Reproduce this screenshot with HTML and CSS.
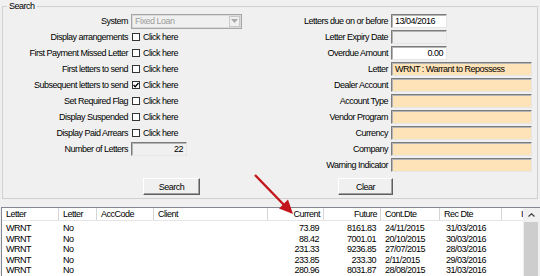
FILE: index.html
```html
<!DOCTYPE html>
<html>
<head>
<meta charset="utf-8">
<link rel="stylesheet" href="styles.css">
</head>
<body>
<div class="app">
  <fieldset class="search">
    <legend>Search</legend>
    <div class="form">
      <div class="lbl">System</div>
      <div class="ctl">
        <div class="combo"><span class="combo-text">Fixed Loan</span><span class="drop"><svg width="7" height="4" viewBox="0 0 7 4"><path d="M0 0h7L3.5 4z" fill="#a8a8a8"/></svg></span></div>
      </div>
      <div class="lbl">Letters due on or before</div>
      <div class="ctl"><div class="tb tb-white w56">13/04/2016</div></div>

      <div class="lbl">Display arrangements</div>
      <div class="ctl check"><span class="cb"></span><span>Click here</span></div>
      <div class="lbl">Letter Expiry Date</div>
      <div class="ctl"><div class="tb tb-grey w56"></div></div>

      <div class="lbl">First Payment Missed Letter</div>
      <div class="ctl check"><span class="cb"></span><span>Click here</span></div>
      <div class="lbl">Overdue Amount</div>
      <div class="ctl"><div class="tb tb-white w56 num">0.00</div></div>

      <div class="lbl">First letters to send</div>
      <div class="ctl check"><span class="cb"></span><span>Click here</span></div>
      <div class="lbl">Letter</div>
      <div class="ctl"><div class="tb tb-peach w141">WRNT : Warrant to Repossess</div></div>

      <div class="lbl">Subsequent letters to send</div>
      <div class="ctl check"><span class="cb"><svg width="6" height="6" viewBox="0 0 6 6"><path d="M0.5 3l1.7 1.8L5.5 1" fill="none" stroke="#000" stroke-width="1.3"/></svg></span><span>Click here</span></div>
      <div class="lbl">Dealer Account</div>
      <div class="ctl"><div class="tb tb-peach w141"></div></div>

      <div class="lbl">Set Required Flag</div>
      <div class="ctl check"><span class="cb"></span><span>Click here</span></div>
      <div class="lbl">Account Type</div>
      <div class="ctl"><div class="tb tb-peach w141"></div></div>

      <div class="lbl">Display Suspended</div>
      <div class="ctl check"><span class="cb"></span><span>Click here</span></div>
      <div class="lbl">Vendor Program</div>
      <div class="ctl"><div class="tb tb-peach w141"></div></div>

      <div class="lbl">Display Paid Arrears</div>
      <div class="ctl check"><span class="cb"></span><span>Click here</span></div>
      <div class="lbl">Currency</div>
      <div class="ctl"><div class="tb tb-peach w141"></div></div>

      <div class="lbl">Number of Letters</div>
      <div class="ctl"><div class="tb tb-grey w56 num">22</div></div>
      <div class="lbl">Company</div>
      <div class="ctl"><div class="tb tb-peach w141"></div></div>

      <div class="lbl"></div>
      <div class="ctl"></div>
      <div class="lbl">Warning Indicator</div>
      <div class="ctl"><div class="tb tb-peach w141"></div></div>
    </div>
    <div class="buttons">
      <button class="btn btn-search">Search</button>
      <button class="btn btn-clear">Clear</button>
    </div>
  </fieldset>

  <div class="lv">
    <div class="lv-main">
      <div class="lv-head">
        <div>Letter</div>
        <div>Letter</div>
        <div>AccCode</div>
        <div>Client</div>
        <div class="r">Current</div>
        <div class="r">Future</div>
        <div>Cont.Dte</div>
        <div>Rec Dte</div>
        <div class="r last">I</div>
      </div>
      <div class="lv-rows">
        <div class="lv-row"><div>WRNT</div><div>No</div><div></div><div></div><div class="r">73.89</div><div class="r">8161.83</div><div>24/11/2015</div><div class="rec">31/03/2016</div><div></div></div>
        <div class="lv-row"><div>WRNT</div><div>No</div><div></div><div></div><div class="r">88.42</div><div class="r">7001.01</div><div>20/10/2015</div><div class="rec">30/03/2016</div><div></div></div>
        <div class="lv-row"><div>WRNT</div><div>No</div><div></div><div></div><div class="r">231.33</div><div class="r">9236.85</div><div>27/07/2015</div><div class="rec">28/03/2016</div><div></div></div>
        <div class="lv-row"><div>WRNT</div><div>No</div><div></div><div></div><div class="r">233.85</div><div class="r">233.30</div><div>2/11/2015</div><div class="rec">29/03/2016</div><div></div></div>
        <div class="lv-row"><div>WRNT</div><div>No</div><div></div><div></div><div class="r">280.96</div><div class="r">8031.87</div><div>28/08/2015</div><div class="rec">31/03/2016</div><div></div></div>
      </div>
    </div>
    <div class="scroll">
      <div class="sb-up"><svg width="7" height="4" viewBox="0 0 7 4"><path d="M0.5 3.5L3.5 0.8 6.5 3.5" fill="none" stroke="#404040" stroke-width="1.2"/></svg></div>
      <div class="sb-thumb"></div>
    </div>
  </div>

  <svg class="arrow" width="540" height="276" viewBox="0 0 540 276">
    <line x1="255" y1="175" x2="285" y2="206" stroke="#c3161c" stroke-width="2.4"/>
    <polygon points="293,214 279,208.5 288,199.5" fill="#c3161c"/>
  </svg>
</div>
</body>
</html>
```

FILE: styles.css
```css
* { box-sizing: border-box; }
html, body { margin: 0; padding: 0; }
body { background: #f0f0f0; }

.app {
  position: relative;
  width: 540px;
  height: 276px;
  overflow: hidden;
  background: #f0f0f0;
  font-family: "Liberation Sans", Arial, sans-serif;
  font-size: 9px;
  letter-spacing: -0.5px;
  color: #000;
}

.search {
  margin: 0 2px;
  padding: 1px 0 3px 0;
  border: 1px solid #d0d0d0;
  min-width: 0;
}
.search legend {
  margin-left: 4px;
  padding: 0 2px;
  height: 12px;
  line-height: 12px;
}

.form {
  display: grid;
  grid-template-columns: 125px 131px 123px 141px;
  column-gap: 3px;
  grid-auto-rows: 16px;
  align-items: center;
}
.lbl {
  text-align: right;
  white-space: nowrap;
}
.ctl {
  display: flex;
  align-items: center;
  white-space: nowrap;
}
.check { gap: 3px; padding-left: 1px; }

.cb {
  width: 8px;
  height: 8px;
  border: 1px solid #333;
  background: #fff;
  display: flex;
  align-items: center;
  justify-content: center;
}

.combo {
  width: 111px;
  height: 15px;
  border: 1px solid #a6a6a6;
  box-shadow: inset 0 0 0 1px #dadada;
  background: #f0f0f0;
  display: flex;
  align-items: center;
  justify-content: space-between;
  padding: 0 1px 0 3px;
}
.combo-text { color: #9d9d9d; }
.drop {
  width: 11px;
  height: 11px;
  border: 1px solid #c8c8c8;
  display: flex;
  align-items: center;
  justify-content: center;
}

.tb {
  height: 14px;
  border-style: solid;
  border-width: 1px;
  border-color: #7c7c7c #e6e6e6 #e6e6e6 #7c7c7c;
  box-shadow: inset 1px 1px 0 #b4b4b4;
  padding: 0 3px;
  line-height: 12px;
  white-space: nowrap;
  overflow: hidden;
}
.tb-white { background: #fff; }
.tb-grey { background: #f0f0f0; }
.tb-peach { background: #ffe3b8; }
.w56 { width: 56px; }
.w141 { width: 141px; }
.num { text-align: right; }

.buttons {
  display: flex;
  margin-top: 5px;
  padding-left: 140px;
}
.btn {
  height: 17px;
  padding: 0;
  font: inherit;
  letter-spacing: inherit;
  color: #000;
  background: #f0f0f0;
  border: 1px solid;
  border-color: #fff #5f5f5f #5f5f5f #fff;
  box-shadow: inset -1px -1px 0 #a0a0a0;
}
.btn-search { width: 57px; }
.btn-clear { width: 55px; margin-left: 138px; }

.lv {
  margin: 8px 0 0 1px;
  height: 80px;
  display: flex;
  background: #fff;
  border: 1px solid #828790;
  border-right: 0;
}
.lv-main {
  flex: 1;
  min-width: 0;
  overflow: hidden;
}
.lv-head, .lv-row {
  display: grid;
  grid-template-columns: 57px 38px 57px 114px 56px 57px 59px 62px 1fr;
}
.lv-head {
  height: 13px;
  border-bottom: 1px solid #e5e5e5;
}
.lv-head > div {
  border-right: 1px solid #d5d5d5;
  padding: 0 3px 0 4px;
  line-height: 12px;
  white-space: nowrap;
  overflow: hidden;
}
.lv-head > .last { border-right: 0; padding-right: 0; }
.lv-rows { padding-top: 2px; }
.lv-row {
  height: 10.5px;
  line-height: 10.5px;
}
.lv-row > div {
  padding: 0 4px;
  white-space: nowrap;
  overflow: hidden;
}
.lv-row > .r { padding-right: 5px; }
.lv-row > .rec { padding-left: 6px; }
.r { text-align: right; }

.scroll {
  width: 17px;
  background: #f0f0f0;
  display: flex;
  flex-direction: column;
}
.sb-up {
  height: 13px;
  display: flex;
  align-items: center;
  justify-content: center;
}
.sb-thumb {
  flex: 1;
  margin: 1px 2px 0 1px;
  background: #cdcdcd;
}

.arrow {
  position: absolute;
  left: 0;
  top: 0;
  pointer-events: none;
}
```
